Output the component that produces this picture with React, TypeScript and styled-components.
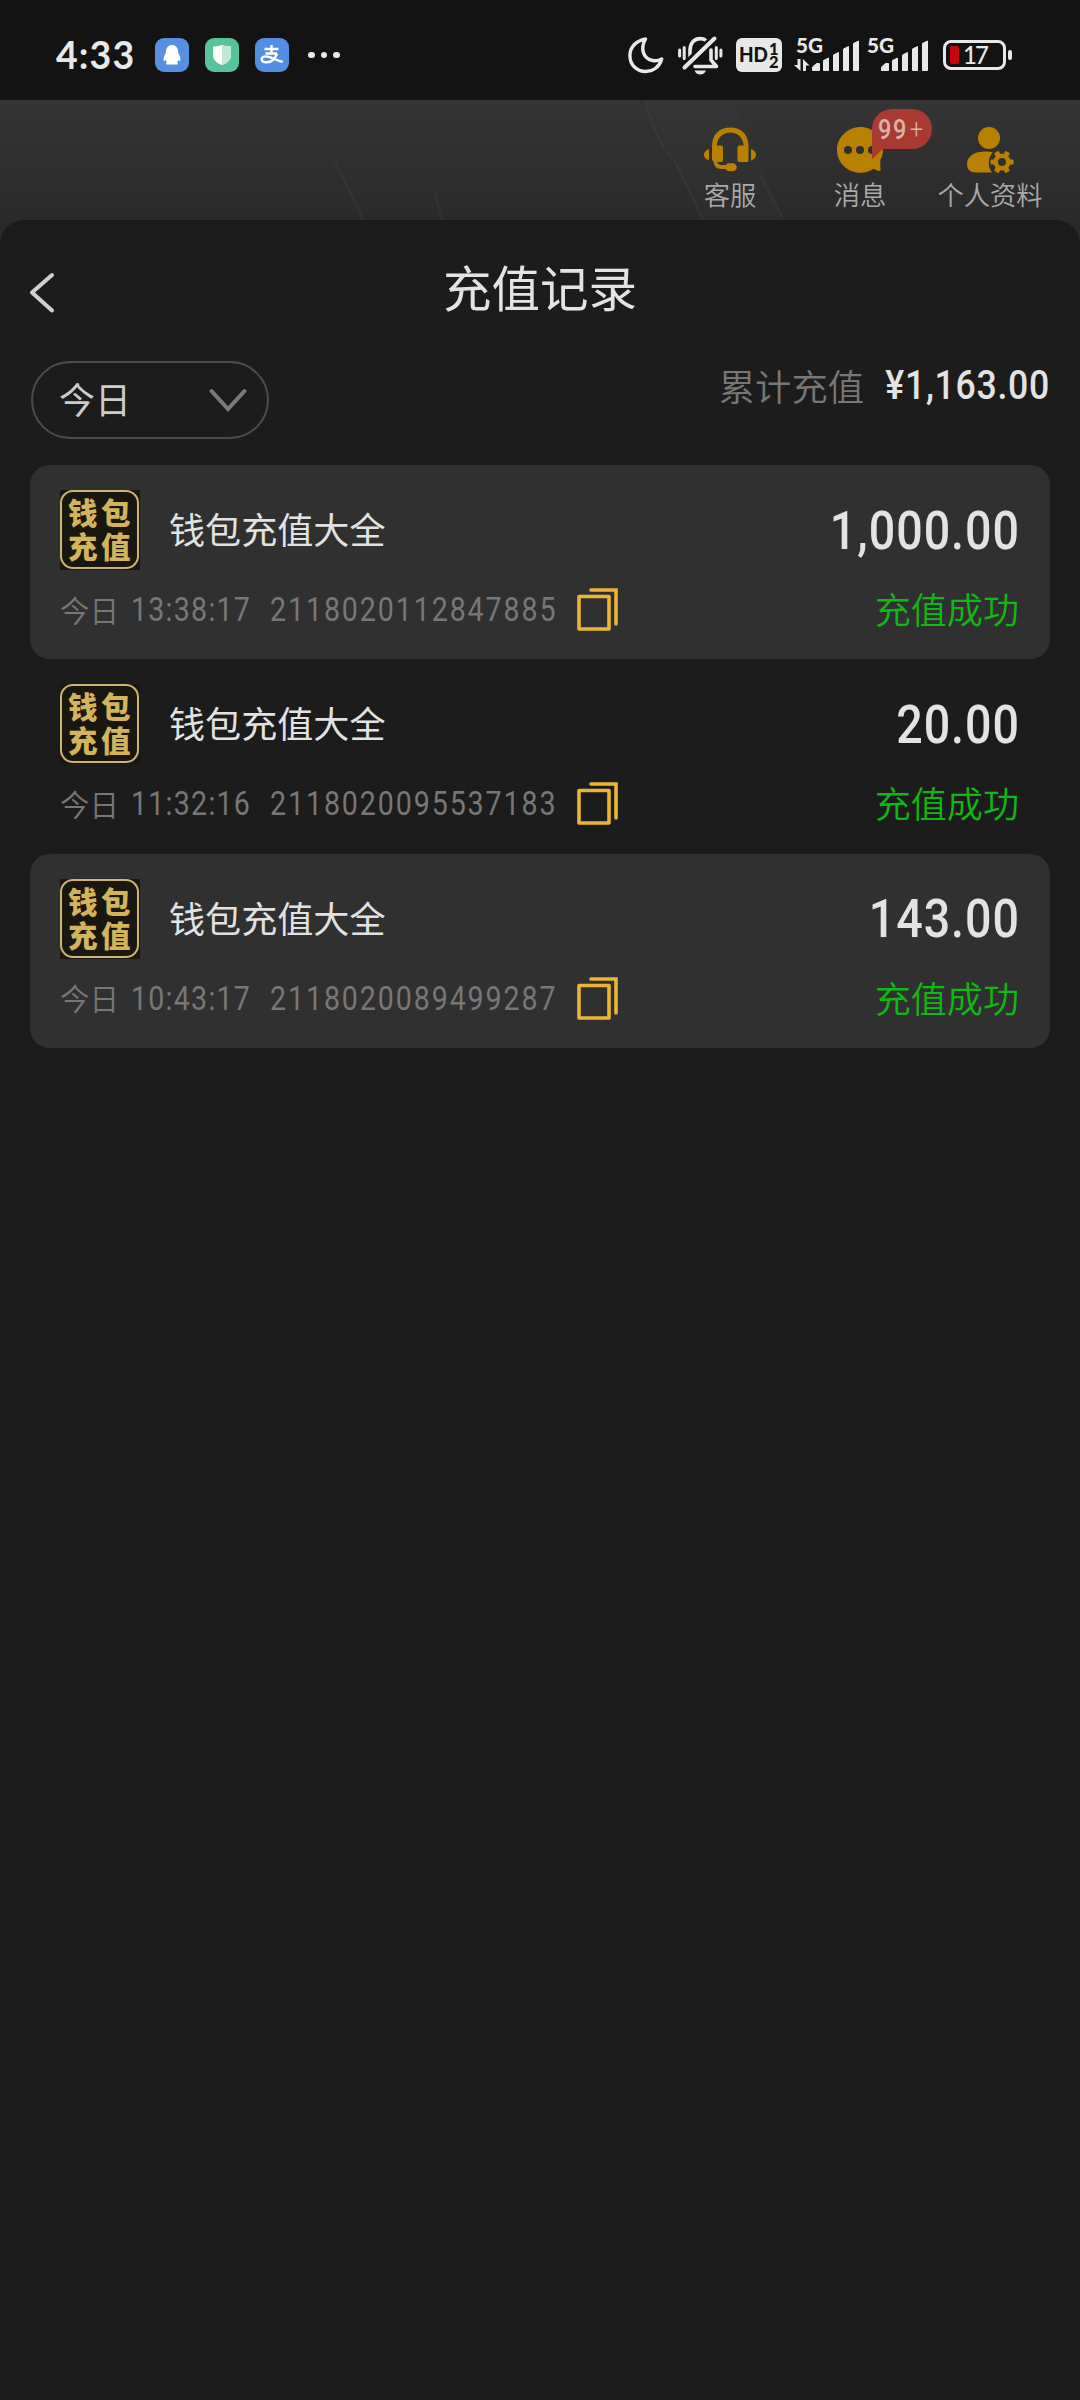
import React from 'react';
import styled, { createGlobalStyle } from 'styled-components';

const cjk = `"Noto Sans CJK SC", "Noto Sans", sans-serif`;
const latin = `Roboto, "Noto Sans CJK SC", sans-serif`;

const GlobalStyle = createGlobalStyle`
  * { box-sizing: border-box; }
  html, body { margin: 0; background: #1c1c1c; }
  body { font-family: ${cjk}; }
  svg { display: block; flex: none; overflow: visible; }
`;

const Screen = styled.div`
  width: 1080px;
  height: 2400px;
  display: flex;
  flex-direction: column;
  overflow: hidden;
  background: #2a2a2a;
`;

/* ---------- status bar ---------- */

const StatusBar = styled.div`
  height: 100px;
  flex: none;
  background: #131313;
  display: flex;
  justify-content: space-between;
  padding: 0 68px 0 56px;
`;

const StatusGroup = styled.div`
  display: flex;
  align-items: center;
  height: 110px;
`;

const Clock = styled.div`
  width: 99px;
  font: 700 37.5px/40px Lato, sans-serif;
  color: #e8e8e8;
  letter-spacing: 1.1px;
`;

const AppBadge = styled.div<{ $bg: string }>`
  width: 34px;
  height: 34px;
  margin-right: 16px;
  border-radius: 9px;
  background: ${(p) => p.$bg};
  display: flex;
  align-items: center;
  justify-content: center;
`;

const Dots = styled.div`
  display: flex;
  gap: 6px;
  margin-left: 3px;
  i { width: 6.5px; height: 6.5px; border-radius: 50%; background: #e8e8e8; }
`;

const HdBadge = styled.div`
  width: 46px;
  height: 34px;
  margin: 0 12px 0 13px;
  border-radius: 6px;
  background: #e8e8e8;
`;

const SignalWrap = styled.div<{ $gap: number }>`
  display: flex;
  margin-right: ${(p) => p.$gap}px;
`;

const Battery = styled.div`
  width: 63px;
  height: 30px;
  border: 3px solid #e8e8e8;
  border-radius: 8px;
  display: flex;
  align-items: center;
  padding-left: 4px;
`;

const BatteryLevel = styled.div`
  width: 9px;
  height: 18px;
  border-radius: 2px;
  background: #c8060c;
`;

const BatteryText = styled.div`
  margin-left: 4px;
  font: 500 24px/24px Lato, sans-serif;
  color: #e8e8e8;
  letter-spacing: -2px;
`;

const BatteryNub = styled.div`
  width: 4px;
  height: 10px;
  margin-left: 2px;
  border-radius: 2px;
  background: #e8e8e8;
`;

/* ---------- dimmed page header ---------- */

const PageHeader = styled.div`
  position: relative;
  height: 120px;
  flex: none;
  background: linear-gradient(#343434, #2a2a2a);
  display: flex;
  justify-content: flex-end;
  padding-right: 25px;
`;

const HeaderLines = styled.svg`
  position: absolute;
  left: 0;
  top: 0;
`;

const HeaderItem = styled.div`
  position: relative;
  width: 130px;
  display: flex;
  flex-direction: column;
  align-items: center;
  padding-top: 26px;
`;

const HeaderLabel = styled.div`
  margin-top: 2px;
  font: 350 26.3px/38px ${cjk};
  color: #aaa;
  white-space: nowrap;
`;

const Unread = styled.div`
  position: absolute;
  left: 77px;
  top: 9px;
  width: 60px;
  height: 50px;
  svg { position: absolute; left: 0; top: 0; }
`;

const UnreadText = styled.div`
  position: absolute;
  left: 6px;
  top: 0;
  display: flex;
  font: 500 28px/41px ${latin};
  color: #d8b3ae;
  transform: scaleX(0.84);
  transform-origin: left;
  letter-spacing: 2px;
  span { font-weight: 300; margin-left: 2px; }
`;

/* ---------- sheet ---------- */

const Sheet = styled.div`
  flex: 1;
  background: #1c1c1c;
  border-radius: 24px 24px 0 0;
  padding: 0 30px;
  display: flex;
  flex-direction: column;
`;

const TitleBar = styled.div`
  height: 141px;
  display: grid;
  grid-template-columns: 60px 1fr 60px;
  align-items: start;
`;

const BackButton = styled.div`
  padding-top: 51px;
`;

const Title = styled.div`
  padding-top: 30px;
  text-align: center;
  font: 400 48.5px/72px ${cjk};
  color: #e3e3e3;
`;

const FilterRow = styled.div`
  height: 104px;
  display: flex;
  justify-content: space-between;
  align-items: flex-start;
`;

const Select = styled.div`
  width: 238px;
  height: 78px;
  margin-left: 1px;
  border: 2px solid #4c4c4c;
  border-radius: 39px;
  display: flex;
  align-items: center;
  justify-content: space-between;
  padding: 0 19px 0 26px;
  font: 400 36px/70px ${cjk};
  color: #ccc;
`;

const SelectLabel = styled.span`
  margin-top: -4px;
`;

const Total = styled.div`
  display: flex;
  height: 48px;
  align-items: center;
  gap: 19px;
  font: 350 36.3px/52px ${cjk};
  color: #777;
`;

/* condensed DIN-like figures; the box keeps the condensed width in the flow */
const Figures = styled.div<{
  $size: number; $width: number; $scale: number; $track?: number;
  $color: string; $weight?: number; $end?: boolean;
}>`
  width: ${(p) => p.$width}px;
  display: flex;
  justify-content: ${(p) => (p.$end ? 'flex-end' : 'flex-start')};
  white-space: nowrap;
  font: ${(p) => p.$weight ?? 450} ${(p) => p.$size}px/1.2 ${latin};
  color: ${(p) => p.$color};
  letter-spacing: ${(p) => p.$track ?? 0}px;
  transform: scaleX(${(p) => p.$scale});
  transform-origin: ${(p) => (p.$end ? 'right' : 'left')} center;
`;

const Record = styled.div<{ $shaded: boolean }>`
  height: 194px;
  margin-bottom: 0.4px;
  border-radius: 20px;
  background: ${(p) => (p.$shaded ? '#303030' : 'transparent')};
  padding: 25px 30px 0;
`;

const RecordTop = styled.div`
  height: 80px;
  display: flex;
  align-items: center;
`;

const Logo = styled.div`
  width: 80px;
  height: 80px;
  background: #1a1710;
`;

const LogoFrame = styled.div`
  width: 79px;
  height: 79px;
  border: 2.5px solid #cdb473;
  border-radius: 13px;
  padding: 2px 0 0 6px;
  font: 900 29.5px/34px ${cjk};
  letter-spacing: 3.5px;
  white-space: pre;
  color: #d4b35a;
`;

const Name = styled.div`
  flex: 1;
  margin: -4px 0 0 29px;
  font: 400 36.1px/54px ${cjk};
  color: #e2e2e2;
`;

const Amount = styled.div`
  padding-top: 3px;
`;

const RecordBottom = styled.div`
  height: 80px;
  display: flex;
  align-items: center;
`;

const Meta = styled.div`
  display: flex;
  padding-top: 1px;
`;

const Day = styled.div`
  width: 71px;
  margin-top: -3px;
  font: 350 29.5px/44px ${cjk};
  color: #777;
`;

const Success = styled.div`
  margin: -4px 1px 0 auto;
  font: 350 36.1px/54px ${cjk};
  color: #10b814;
`;

const Signal = ({ data }: { data?: boolean }) => (
  <svg width={data ? 68 : 65} height="36" viewBox={data ? '0 0 68 36' : '-3 0 65 36'} fill="#e8e8e8">
    <text x={data ? 2 : -3} y="16" fontFamily="Lato, sans-serif" fontWeight="900" fontSize="20.5" textLength="27" lengthAdjust="spacingAndGlyphs">5G</text>
    {data && <path d="M0 28h3.5v-6h3v12zM9 34V22l6.5 6.5H12V34z" />}
    <g transform={data ? 'translate(18 0)' : 'translate(11 0)'} stroke="#e8e8e8" strokeLinejoin="round">
      <path d="M0.5 33.5v-3.500l4-3.500h3v7z" />
      <path d="M11.500 33.500V23.500l5-2.500v12.500z" />
      <path d="M21.500 33.500V18l5-2.500v18z" />
      <path d="M31.500 33.500V12l5-2.500v24z" />
      <path d="M41.500 33.500V6.500l5-2.500v29.500z" />
    </g>
  </svg>
);

const MoonIcon = () => (
  <svg width="36" height="38" viewBox="0 0 36 38" fill="none" stroke="#e8e8e8" strokeWidth="3.4" strokeLinejoin="round">
    <path d="M17.500 3C7.500 5 1.900 11.500 1.900 19.500c0 9.500 7 16 15.600 16 7.500 0 14-4.500 16.200-12.500-3 1.500-6 2-9 1.500C16 23 11.500 13.500 17.500 3z" />
  </svg>
);

const MutedBell = () => (
  <svg width="45" height="40" viewBox="0 0 45 40" fill="none" stroke="#e8e8e8" strokeWidth="3.6" strokeLinecap="round" strokeLinejoin="round">
    <path d="M12 22v-6.500C12 8.500 16 3.600 22 3.600c2.500 0 4.500.600 6 1.900" />
    <path d="M17 31.500h21.500L33 25v-10" />
    <path d="M36 3.500 6 31.500" stroke="#131313" strokeWidth="8" />
    <path d="M36.500 3.500 6.500 32.500" strokeWidth="4" />
    <path d="M1.600 15v6M6.200 12.500v11M38.300 12.500v11M42.900 15v6" strokeWidth="3" />
    <path d="M16.500 35.500h11.500c-1.500 3-3.500 4-5.800 4s-4.200-1-5.700-4z" fill="#e8e8e8" stroke="none" />
  </svg>
);

const HdIcon = () => (
  <svg width="46" height="34" viewBox="0 0 46 34" fill="#131313" fontFamily="Lato, sans-serif">
    <text x="3" y="24" fontSize="20" fontWeight="900" textLength="29" lengthAdjust="spacingAndGlyphs">HD</text>
    <text x="33" y="16.5" fontSize="16.5" fontWeight="900">1</text>
    <text x="33" y="30" fontSize="16.5" fontWeight="900">2</text>
  </svg>
);

const AlipayIcon = () => (
  <svg width="24" height="20" viewBox="0 0 24 20" fill="none" stroke="#fff">
    <path d="M4.500 4h14M11.500 0v8.500M5.500 8.500h11.500" strokeWidth="2.4" />
    <path d="M17 8.500c-1.500 4.500-5 8.800-10.500 8.800-3 0-4.800-1.300-4.800-3 0-1.800 1.600-2.900 4-2.900 4 0 8 2.800 17 5.600" strokeWidth="2.4" />
  </svg>
);

const HeadsetIcon = () => (
  <svg width="52" height="47" viewBox="0 0 52 47" fill="#b88200">
    <path d="M8 20C8 8.500 15.500 1.500 26.300 1.500S44.500 8.500 44.500 20v14.500a1.500 1.500 0 0 1-1.500 1.500h-7.500a2 2 0 0 1-2-2V21.500a2 2 0 0 1 2-2h4.200C39 11.500 33.500 6.500 26.300 6.500S13.600 11.500 12.800 19.500H17a2 2 0 0 1 2 2V34a2 2 0 0 1-2 2H13c1 2 2 3 4.500 3h4.200c.8-1.200 2-1.800 3.600-1.800h3.300c2.500 0 4.200 1.700 4.200 4s-1.700 4-4.200 4h-3.300c-1.800 0-3-.800-3.700-2.200H17c-4.500 0-7-3-7.600-7.500L8 34z" />
    <path d="M5 23v11.500C2 33.500 0 31.500 0 28.700S2 24 5 23zM47 23c3 1 5 3 5 5.700s-2 4.800-5 5.800z" />
  </svg>
);

const MessageIcon = () => (
  <svg width="46" height="47" viewBox="0 0 46 47">
    <path d="M23.500 1C36 1 46 11 46 23.500c0 4-1 7.500-2.700 10.500L43.500 45c-2 0-4.500-.5-7-2.200A22.500 22.500 0 0 1 23.500 46.800C11 46.800 0 37 0 24S11 1 23.500 1z" fill="#b88200" />
    <circle cx="11" cy="24" r="4" fill="#303030" />
    <circle cx="23" cy="24" r="4" fill="#303030" />
    <circle cx="35" cy="24" r="4" fill="#303030" />
  </svg>
);

const ProfileIcon = () => (
  <svg width="46" height="47" viewBox="0 0 46 47" fill="#b88200">
    <circle cx="22" cy="12" r="11" />
    <path d="M0 38c0-8 8-12.500 18-12.500 3.500 0 5.500.2 7.800.8A16 16 0 0 0 25 46.500H9C3 46.500 0 43 0 38z" />
    <g transform="translate(35 36)">
      <circle r="6.300" fill="none" stroke="#b88200" strokeWidth="4.6" />
      {[0, 60, 120, 180, 240, 300].map((a) => (
        <rect key={a} x="-2.6" y="-11.5" width="5.2" height="5" rx="1" transform={`rotate(${a + 30})`} />
      ))}
    </g>
  </svg>
);

const CopyIcon = () => (
  <svg width="42" height="44" viewBox="0 0 42 44" fill="none" stroke="#eab537" strokeWidth="3.6" strokeLinejoin="round" strokeLinecap="round">
    <rect x="2" y="8.5" width="30" height="32.5" />
    <path d="M14 2H39v34" strokeLinejoin="miter" />
  </svg>
);

const records = [
  { time: '13:38:17', id: '2118020112847885', amount: '1,000.00' },
  { time: '11:32:16', id: '2118020095537183', amount: '20.00' },
  { time: '10:43:17', id: '2118020089499287', amount: '143.00' },
];

export default function App() {
  return (
    <Screen>
      <GlobalStyle />
      <StatusBar>
        <StatusGroup>
          <Clock>4:33</Clock>
          <AppBadge $bg="#5790e0">
            <svg width="18" height="20" viewBox="0 0 18 20" fill="#fff">
              <path d="M9 0c4 0 6 3 6 6.500 0 1.500 1 2.800 1.800 4.500.8 2 .9 4.500.2 5-.5.300-1.200-.7-1.600-1.300-.3 1.300-.8 2-1.500 2.800.8.400 1.200 1 .8 2H3.300c-.4-1 0-1.600.8-2-.7-.8-1.200-1.500-1.500-2.800C2.200 15.300 1.500 16.300 1 16c-.7-.5-.6-3 .2-5C2 9.300 3 8 3 6.500 3 3 5 0 9 0z" />
            </svg>
          </AppBadge>
          <AppBadge $bg="#56c49a">
            <svg width="18" height="20" viewBox="0 0 18 20">
              <path d="M9 0c3 1 6 1.500 9 1.500V10c0 5-4 8.500-9 10-5-1.500-9-5-9-10V1.500C3 1.500 6 1 9 0z" fill="#fff" />
              <path d="M9 0c3 1 6 1.500 9 1.500V10c0 5-4 8.500-9 10z" fill="#bfe8d6" />
            </svg>
          </AppBadge>
          <AppBadge $bg="#528fe2"><AlipayIcon /></AppBadge>
          <Dots><i /><i /><i /></Dots>
        </StatusGroup>
        <StatusGroup>
          <SignalWrap $gap={14}><MoonIcon /></SignalWrap>
          <MutedBell />
          <HdBadge><HdIcon /></HdBadge>
          <SignalWrap $gap={5}><Signal data /></SignalWrap>
          <SignalWrap $gap={11.5}><Signal /></SignalWrap>
          <Battery><BatteryLevel /><BatteryText>17</BatteryText></Battery>
          <BatteryNub />
        </StatusGroup>
      </StatusBar>

      <PageHeader>
        <HeaderLines width="1080" height="120" viewBox="0 0 1080 120" fill="none">
          <path d="M645 0h90l50 120h-83z" fill="#fff" opacity="0.012" />
          <path d="M645 0c8 30 20 52 30 62l28 58M335 60l28 60M434 90l8 30M760 75l22 42" stroke="#fff" opacity="0.03" strokeWidth="2.5" />
        </HeaderLines>
        <HeaderItem>
          <HeadsetIcon />
          <HeaderLabel>客服</HeaderLabel>
        </HeaderItem>
        <HeaderItem>
          <MessageIcon />
          <HeaderLabel>消息</HeaderLabel>
          <Unread>
            <svg width="60" height="50" viewBox="0 0 60 50"><path d="M0 50V20A20 20 0 0 1 20 0H40a20 20 0 0 1 0 40H11z" fill="#a93a32" /></svg>
            <UnreadText>99<span>+</span></UnreadText>
          </Unread>
        </HeaderItem>
        <HeaderItem>
          <ProfileIcon />
          <HeaderLabel>个人资料</HeaderLabel>
        </HeaderItem>
      </PageHeader>

      <Sheet>
        <TitleBar>
          <BackButton>
            <svg width="28" height="44" viewBox="0 0 28 44" fill="none" stroke="#d0d0d0" strokeWidth="4" strokeLinecap="round" strokeLinejoin="round">
              <path d="M22 4 2 21.500 22 39.500" />
            </svg>
          </BackButton>
          <Title>充值记录</Title>
        </TitleBar>
        <FilterRow>
          <Select>
            <SelectLabel>今日</SelectLabel>
            <svg width="40" height="24" viewBox="0 0 40 24" fill="none" stroke="#7a7a7a" strokeWidth="4" strokeLinecap="round">
              <path d="M3.500 3 20 21 36.500 3" />
            </svg>
          </Select>
          <Total>
            <span>累计充值</span>
            <Figures $size={40.5} $width={167} $scale={0.88} $track={0.8} $color="#e3e3e3" $weight={500} $end>¥1,163.00</Figures>
          </Total>
        </FilterRow>
        {records.map((r, i) => (
          <Record key={r.id} $shaded={i % 2 === 0}>
            <RecordTop>
              <Logo>
                <LogoFrame>{'钱包\n充值'}</LogoFrame>
              </Logo>
              <Name>钱包充值大全</Name>
              <Amount>
                <Figures $size={53} $width={190} $scale={0.88} $track={1.1} $color="#e3e3e3" $weight={500} $end>{r.amount}</Figures>
              </Amount>
            </RecordTop>
            <RecordBottom>
              <Day>今日</Day>
              <Meta>
                <Figures $size={32.5} $width={139} $scale={0.88} $track={1.4} $color="#777">{r.time}</Figures>
                <Figures $size={32.5} $width={307} $scale={0.88} $track={2.15} $color="#777">{r.id}</Figures>
              </Meta>
              <CopyIcon />
              <Success>充值成功</Success>
            </RecordBottom>
          </Record>
        ))}
      </Sheet>
    </Screen>
  );
}
